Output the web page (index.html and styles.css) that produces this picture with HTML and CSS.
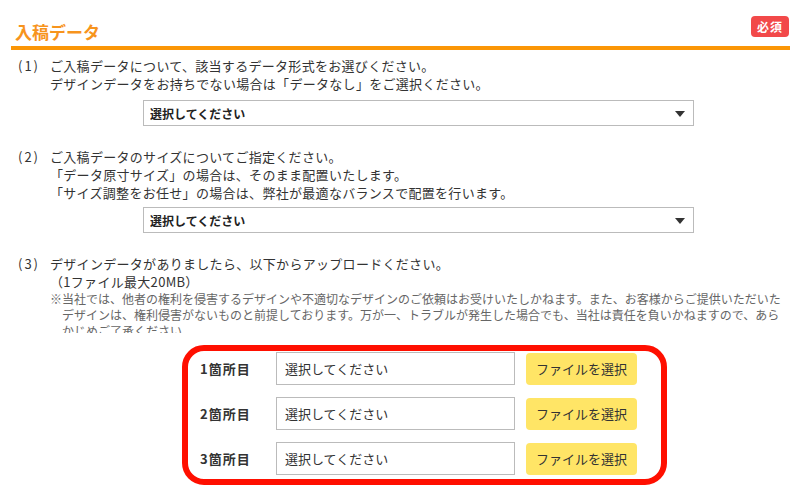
FILE: index.html
```html
<!DOCTYPE html>
<html lang="ja">
<head>
    <meta charset="UTF-8">
    <meta name="viewport" content="width=device-width, initial-scale=1.0">
    <title>入稿データ</title>
    <link rel="stylesheet" href="styles.css">
</head>
<body>
    <div class="section">
        <div class="head">
            <h2>入稿データ</h2>
            <span class="badge">必須</span>
        </div>

        <div class="question q1">
            <span class="num">(1)</span>
            <div class="body">
                <p>ご入稿データについて、該当するデータ形式をお選びください。<br>デザインデータをお持ちでない場合は「データなし」をご選択ください。</p>
                <div class="select-wrap">
                    <select>
                        <option>選択してください</option>
                        <option>データなし</option>
                    </select>
                </div>
            </div>
        </div>

        <div class="question q2">
            <span class="num">(2)</span>
            <div class="body">
                <p>ご入稿データのサイズについてご指定ください。<br>「データ原寸サイズ」の場合は、そのまま配置いたします。<br>「サイズ調整をお任せ」の場合は、弊社が最適なバランスで配置を行います。</p>
                <div class="select-wrap select-2">
                    <select>
                        <option>選択してください</option>
                        <option>データ原寸サイズ</option>
                        <option>サイズ調整をお任せ</option>
                    </select>
                </div>
            </div>
        </div>

        <div class="question q3">
            <span class="num">(3)</span>
            <div class="body">
                <p>デザインデータがありましたら、以下からアップロードください。<br>（1ファイル最大20MB）</p>
                <p class="note">※当社では、他者の権利を侵害するデザインや不適切なデザインのご依頼はお受けいたしかねます。また、お客様からご提供いただいた<br>デザインは、権利侵害がないものと前提しております。万が一、トラブルが発生した場合でも、当社は責任を負いかねますので、あら<br>かじめご了承ください。</p>
            </div>
        </div>

        <div class="upload">
            <div class="upload-row">
                <label class="upload-label">1箇所目</label>
                <input type="text" placeholder="選択してください" readonly>
                <button type="button">ファイルを選択</button>
            </div>
            <div class="upload-row">
                <label class="upload-label">2箇所目</label>
                <input type="text" placeholder="選択してください" readonly>
                <button type="button">ファイルを選択</button>
            </div>
            <div class="upload-row">
                <label class="upload-label">3箇所目</label>
                <input type="text" placeholder="選択してください" readonly>
                <button type="button">ファイルを選択</button>
            </div>
            <div class="highlight"></div>
        </div>
    </div>
</body>
</html>
```

FILE: styles.css
```css
body {
    margin: 0;
    background-color: #fff;
    color: #333;
    font-family: "Noto Sans CJK JP", "Noto Sans", sans-serif;
}
.section {
    width: 779px;
    margin-left: 11px;
}
.head {
    display: flex;
    justify-content: space-between;
    align-items: flex-start;
    padding: 16px 1px 3px 4px;
    border-bottom: 4px solid #fb9606;
}
.head h2 {
    margin: 5px 0 0;
    font-size: 17px;
    line-height: 22px;
    color: #f7941d;
}
.badge {
    width: 38px;
    height: 21px;
    line-height: 21px;
    text-align: center;
    border-radius: 4px;
    background-color: #f24949;
    color: #fff;
    font-size: 12px;
    font-weight: bold;
    letter-spacing: 1px;
}
.question {
    display: flex;
    font-size: 13px;
    line-height: 18px;
    letter-spacing: 0.3px;
}
.q1 {
    margin-top: 7px;
}
.q2 {
    margin-top: 22px;
}
.q3 {
    margin-top: 22px;
}
.num {
    width: 39px;
    padding-left: 7px;
    box-sizing: border-box;
    letter-spacing: 2px;
}
.body {
    flex: 1;
}
.body p {
    margin: 0;
}
.select-wrap {
    position: relative;
    width: 551px;
    margin: 7px 0 0 93px;
}
.select-2 {
    margin-top: 5px;
}
.select-wrap select {
    display: block;
    width: 100%;
    height: 26px;
    padding: 0 6px;
    border: 1px solid #bbb;
    border-radius: 0;
    background-color: #fff;
    color: #222;
    font-family: inherit;
    font-size: 12px;
    font-weight: bold;
    -webkit-appearance: none;
    appearance: none;
}
.select-wrap::after {
    content: "";
    position: absolute;
    right: 9px;
    top: 11px;
    border-left: 5px solid transparent;
    border-right: 5px solid transparent;
    border-top: 6px solid #333;
    pointer-events: none;
}
.body .note {
    padding-left: 12px;
    text-indent: -12px;
    font-size: 12px;
    line-height: 16px;
    letter-spacing: 0;
    color: #666;
    max-height: 42px;
    overflow: hidden;
}
.upload {
    position: relative;
    width: 437px;
    margin: 19px 0 0 189px;
}
.upload-row {
    display: flex;
    align-items: center;
    height: 33px;
    margin-bottom: 12px;
}
.upload-label {
    width: 76px;
    font-size: 13px;
    font-weight: bold;
    letter-spacing: 1px;
}
.upload-row input {
    width: 239px;
    height: 33px;
    padding: 0 8px;
    box-sizing: border-box;
    border: 1px solid #bbb;
    font-family: inherit;
    font-size: 13px;
}
.upload-row input::placeholder {
    color: #333;
}
.upload-row button {
    width: 111px;
    height: 32px;
    margin-left: 11px;
    border: none;
    border-radius: 4px;
    background-color: #ffe566;
    color: #333;
    font-family: inherit;
    font-size: 13px;
    cursor: pointer;
}
.highlight {
    position: absolute;
    left: -18px;
    top: -7px;
    width: 485px;
    height: 140px;
    box-sizing: border-box;
    border: 6px solid #ff0f00;
    border-radius: 22px;
    pointer-events: none;
}
```
